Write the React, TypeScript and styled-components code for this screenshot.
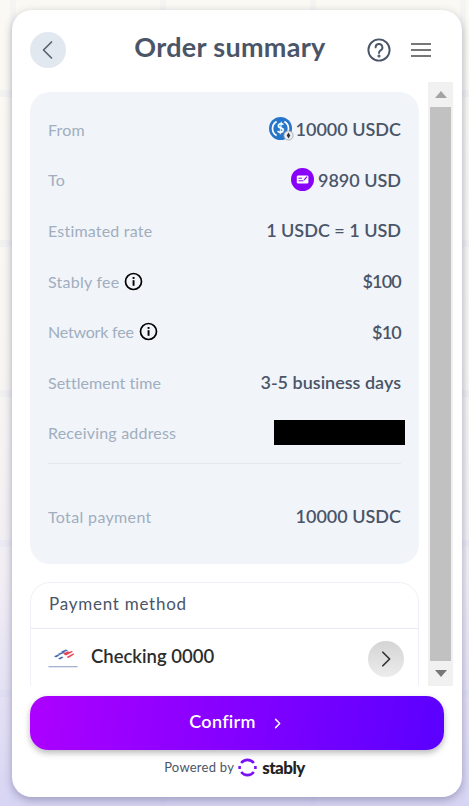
import React from "react";
import styled, { createGlobalStyle } from "styled-components";

const Global = createGlobalStyle`
  html, body { margin: 0; padding: 0; height: 100%; }
  body {
    width: 469px; height: 806px; overflow: hidden;
    font-family: "Lato", "Open Sans", sans-serif;
    background:
      repeating-linear-gradient(90deg, transparent 0 10px, rgba(190, 200, 240, 0.1) 10px 16px, transparent 16px 150px),
      repeating-linear-gradient(180deg, transparent 0 90px, rgba(190, 200, 240, 0.12) 90px 97px, transparent 97px 150px),
      linear-gradient(180deg, #fbf9f3 0%, #f8f6f2 45%, #f1eef4 72%, #d8d5f4 100%);
  }
`;

const Page = styled.div`
  width: 469px; height: 806px; padding: 10px 7px 9px 12px; box-sizing: border-box;
`;
const Card = styled.main`
  height: 787px; background: #fff; border-radius: 20px;
  box-shadow: 0 3px 9px rgba(60, 60, 100, 0.38);
  display: flex; flex-direction: column;
  padding: 22px 9px 0 18px; box-sizing: border-box;
`;
const Header = styled.header`
  height: 36px; display: flex; align-items: center; flex: none; padding-right: 21px;
`;
const RoundButton = styled.button<{ $bg: string }>`
  width: 36px; height: 36px; border-radius: 50%; border: 0; padding: 0; flex: none;
  display: flex; align-items: center; justify-content: center;
  background: ${(p) => p.$bg};
`;
const Title = styled.h1`
  flex: 1; margin: 0 0 6px; text-align: center; font-size: 27px; line-height: 32px;
  font-weight: 700; color: #4a5568; letter-spacing: 0.3px; padding-left: 27px;
`;
const HeaderIcons = styled.div`
  display: flex; align-items: center; gap: 19px; color: #4a5568;
`;
const Body = styled.div`
  flex: none; height: 604px; margin-top: 14px; display: flex; gap: 9px;
`;
const Content = styled.div`
  width: 389px; overflow: hidden; padding-top: 10px; box-sizing: border-box; display: flex; flex-direction: column;
`;
const Summary = styled.section`
  flex: none; height: 472px; background: #f1f4f9; border-radius: 20px; padding: 12px 18px 0; box-sizing: border-box;
`;
const Row = styled.div`
  height: 50.6px; display: flex; align-items: center; justify-content: space-between;
`;
const Label = styled.span<{ $spacing?: number }>`
  display: flex; align-items: center; gap: 5px; font-size: 16px; color: #a0aec0;
  letter-spacing: ${(p) => p.$spacing ?? 0.2}px;
`;
const Value = styled.span<{ $compact?: boolean }>`
  display: flex; align-items: center; gap: 1px; font-size: 18px; font-weight: 600; color: #4a5568;
  letter-spacing: ${(p) => (p.$compact ? "-0.8px" : "0")};
`;
const Redacted = styled.div`
  width: 131px; height: 25px; margin-right: -4px; background: #000;
`;
const Divider = styled.hr`
  border: 0; border-top: 1px solid #e2e8f0; margin: 5px 0 0;
`;
const TotalRow = styled(Row)`
  margin-top: 27px;
`;
const Payment = styled.section`
  flex: none; margin-top: 18px; height: 120px; border: 1px solid #edf0f7; border-radius: 20px; box-sizing: border-box;
`;
const PaymentTitle = styled.div`
  height: 46px; display: flex; align-items: center; padding: 0 18px 4px; box-sizing: border-box; font-size: 17px; color: #4a5568;
  letter-spacing: 0.75px; border-bottom: 1px solid #e9e9f3;
`;
const PaymentRow = styled.div`
  height: 60px; display: flex; align-items: center; padding: 0 14px 0 17px; gap: 13px;
`;
const BankName = styled.span`
  flex: 1; font-size: 18.5px; font-weight: 600; color: #2d2d2d; margin-top: -6px;
`;
const GreyChevron = styled(RoundButton)`
  background: linear-gradient(180deg, #d4d4d4, #ececec);
`;
const Track = styled.div`
  width: 25px; background: #f1f1f1; flex: none; display: flex; flex-direction: column; align-items: center; box-sizing: border-box;
`;
const ArrowCell = styled.div`
  height: 25px; flex: none; display: flex; align-items: center; justify-content: center;
`;
const Thumb = styled.div`
  flex: 1; width: 21px; background: #c1c1c1;
`;
const Confirm = styled.button`
  flex: none; width: 414px; height: 54px; margin-top: 10px; border: 0; border-radius: 18px;
  background: linear-gradient(100deg, #ad00ff 0%, #5a00ff 100%);
  color: #fff; font: 600 18px "Lato", sans-serif; letter-spacing: 0.3px;
  box-shadow: 0 3px 6px rgba(0, 0, 0, 0.28);
  display: flex; align-items: center; justify-content: center; gap: 16px;
`;
const ConfirmText = styled.span`
  margin-top: -5px; margin-left: -2px;
`;
const Powered = styled.footer`
  flex: none; width: 414px; margin-top: 7px; padding-right: 5px; box-sizing: border-box;
  display: flex; align-items: center; justify-content: center; gap: 4px;
  font-size: 13px; color: #4a5568; letter-spacing: 0.25px;
`;
const PoweredText = styled.span`
  margin-top: -1px;
`;
const Brand = styled.span`
  font-size: 17px; font-weight: 900; color: #222; letter-spacing: -0.5px; margin-left: 1px;
`;

const Chevron = ({ dir, size = 20, color = "#555", w = 1.8 }: { dir: "l" | "r"; size?: number; color?: string; w?: number }) => (
  <svg width={size} height={size} viewBox="0 0 20 20" fill="none" stroke={color} strokeWidth={w} strokeLinecap="round" strokeLinejoin="round">
    <path d={dir === "l" ? "M13.5 2 L5.5 10 L13.5 18" : "M6.5 2.5 L14 10 L6.5 17.5"} />
  </svg>
);
const Info = () => (
  <svg width="19" height="19" viewBox="0 0 19 19" fill="none">
    <circle cx="9.5" cy="9.5" r="8" stroke="#000" strokeWidth="1.7" />
    <rect x="8.6" y="8.2" width="1.9" height="5.6" fill="#000" />
    <rect x="8.6" y="5" width="1.9" height="1.9" fill="#000" />
  </svg>
);
const Usdc = () => (
  <svg width="25" height="25" viewBox="0 0 25 25" style={{ marginLeft: -1, marginRight: 1 }}>
    <circle cx="11.5" cy="11.5" r="11.5" fill="#2775ca" />
    <path d="M7.6 4.4 A8.2 8.2 0 0 0 7.6 18.6 M15.4 4.4 A8.2 8.2 0 0 1 15.4 18.6" fill="none" stroke="#fff" strokeWidth="1.7" />
    <text x="11.5" y="16" textAnchor="middle" fontSize="13" fontWeight="700" fill="#fff" fontFamily="Lato, sans-serif">$</text>
    <circle cx="19.5" cy="18.5" r="4.6" fill="#e8edf3" stroke="#9aa3ad" strokeWidth="0.8" />
    <path d="M19.5 15.5 L21.3 18.6 L19.5 21.6 L17.7 18.6 Z" fill="#333" />
  </svg>
);
const CheckBadge = () => (
  <svg width="23" height="23" viewBox="0 0 23 23" style={{ marginRight: 3 }}>
    <circle cx="11.5" cy="11.5" r="11.5" fill="#8800f8" />
    <rect x="5.8" y="7.5" width="11.6" height="8" rx="1.2" fill="#fff" />
    <path d="M7.5 10.2h3.5M7.5 12.8h5" stroke="#8800f8" strokeWidth="1" />
    <path d="M13 12.2 L16 8.6" stroke="#8800f8" strokeWidth="1.2" />
  </svg>
);
const BankLogo = () => (
  <svg width="30" height="22" viewBox="0 0 30 22">
    <path d="M13 3.6 L18 1.6 L20 2.4 L15 4.6Z M9.5 6 L15.5 3.6 L17 4.5 L11.5 7Z" fill="#4a6cb0" />
    <path d="M16 6.5 L23.5 3 L25 3.8 L18 7.6Z M18.5 9 L25.5 5.2 L26 6.4 L20.5 10Z M15 5.6 L20 3.2 L21.5 3.9 L16.5 6.4Z" fill="#e8455a" />
    <path d="M6 8.2 L10 6.6 L11.5 7.6 L8 9.4Z M10 10.4 L14 8.5 L15.5 9.5 L12 11.4Z" fill="#4a6cb0" />
    <rect x="0.5" y="18" width="29" height="1.3" fill="#a6b1d0" />
  </svg>
);
const StablyMark = () => (
  <svg width="19" height="19" viewBox="0 0 19 19" fill="none" stroke="#7a12f5" strokeWidth="2.6">
    <path d="M3.2 5 A7.9 7.9 0 0 1 15.8 5" />
    <path d="M17.4 8 V11" />
    <path d="M15.8 14 A7.9 7.9 0 0 1 3.2 14" />
    <path d="M1.6 8 V11" />
  </svg>
);

export default function App() {
  return (
    <Page>
      <Global />
      <Card>
        <Header>
          <RoundButton $bg="#e2e8f0" aria-label="Back">
            <Chevron dir="l" size={20} color="#5a6270" w={1.7} />
          </RoundButton>
          <Title>Order summary</Title>
          <HeaderIcons>
            <svg width="24" height="24" viewBox="0 0 24 24" fill="none" stroke="#4a5568" strokeWidth="1.9" strokeLinecap="round">
              <circle cx="12" cy="12" r="10.6" />
              <path d="M8.6 9.4 A3.4 3.4 0 1 1 13.6 12.4 C12.4 13.1 12 13.8 12 15" />
              <circle cx="12" cy="18" r="0.6" />
            </svg>
            <svg width="22" height="16" viewBox="0 0 22 16" stroke="#777" strokeWidth="2">
              <path d="M1 2h20M1 8h20M1 14h20" />
            </svg>
          </HeaderIcons>
        </Header>
        <Body>
          <Content>
            <Summary>
              <Row><Label>From</Label><Value><Usdc />10000 USDC</Value></Row>
              <Row><Label>To</Label><Value><CheckBadge />9890 USD</Value></Row>
              <Row><Label>Estimated rate</Label><Value>1 USDC = 1 USD</Value></Row>
              <Row><Label $spacing={0.25}>Stably fee <Info /></Label><Value $compact>$100</Value></Row>
              <Row><Label $spacing={-0.2}>Network fee <Info /></Label><Value $compact>$10</Value></Row>
              <Row><Label $spacing={0.05}>Settlement time</Label><Value>3-5 business days</Value></Row>
              <Row><Label>Receiving address</Label><Redacted /></Row>
              <Divider />
              <TotalRow><Label $spacing={0.35}>Total payment</Label><Value>10000 USDC</Value></TotalRow>
            </Summary>
            <Payment>
              <PaymentTitle>Payment method</PaymentTitle>
              <PaymentRow>
                <BankLogo />
                <BankName>Checking 0000</BankName>
                <GreyChevron $bg="#ddd" aria-label="Change">
                  <Chevron dir="r" size={18} color="#333" w={1.9} />
                </GreyChevron>
              </PaymentRow>
            </Payment>
          </Content>
          <Track>
            <ArrowCell><svg width="12" height="7"><path d="M6 0 L12 7 H0Z" fill="#a3a3a3" /></svg></ArrowCell>
            <Thumb />
            <ArrowCell><svg width="12" height="7"><path d="M0 0 H12 L6 7Z" fill="#777" /></svg></ArrowCell>
          </Track>
        </Body>
        <Confirm>
          <ConfirmText>Confirm</ConfirmText>
          <Chevron dir="r" size={11} color="#fff" w={2.6} />
        </Confirm>
        <Powered>
          <PoweredText>Powered by</PoweredText><StablyMark /><Brand>stably</Brand>
        </Powered>
      </Card>
    </Page>
  );
}
